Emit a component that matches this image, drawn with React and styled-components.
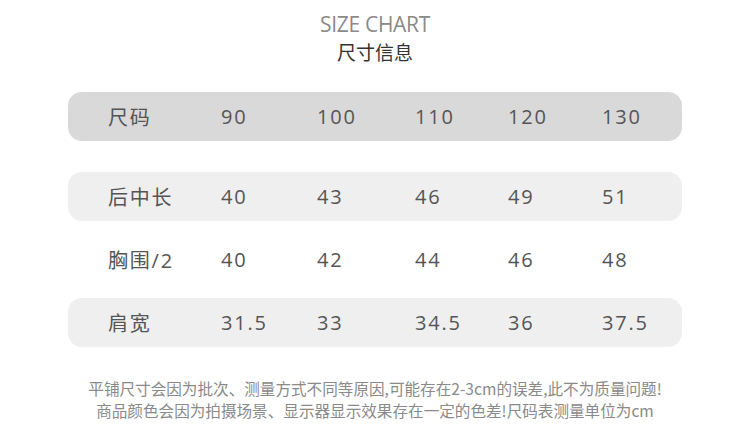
import React from "react";
import styled, { createGlobalStyle } from "styled-components";

const GlobalStyle = createGlobalStyle`
  html, body {
    margin: 0;
    padding: 0;
    background: #fff;
  }
  body {
    font-family: "Open Sans", "Noto Sans CJK SC", sans-serif;
  }
`;

const Page = styled.div`
  width: 750px;
  height: 439px;
  box-sizing: border-box;
  padding-top: 11px;
  display: flex;
  flex-direction: column;
  align-items: center;
`;

const Title = styled.div`
  font-size: 21px;
  line-height: 27px;
  color: #8a8a8a;
  letter-spacing: -0.3px;
`;

const SubTitle = styled.div`
  font-family: "Noto Sans CJK SC", sans-serif;
  font-size: 19px;
  line-height: 28px;
  color: #333;
`;

const Table = styled.div`
  width: 614px;
  margin-top: 26px;
  display: flex;
  flex-direction: column;
  gap: 14px;
`;

const Row = styled.div`
  display: grid;
  grid-template-columns: 113px 96px 98px 93px 94px 1fr;
  align-items: center;
  height: 49px;
  padding-left: 40px;
  border-radius: 14px;
  background: ${(p) => (p.$head ? "#d9d9d9" : p.$shade ? "#efefef" : "transparent")};
  margin-bottom: ${(p) => (p.$head ? "17px" : "0")};
`;

const Cell = styled.div`
  font-family: "Open Sans", "Noto Sans CJK SC", sans-serif;
  font-size: 20px;
  color: #555;
  letter-spacing: 1.8px;
  white-space: nowrap;
`;

const Note = styled.div`
  margin-top: 30px;
  font-family: "Noto Sans CJK SC", sans-serif;
  font-size: 15.6px;
  line-height: 22px;
  color: #8a8a8a;
  text-align: center;
  white-space: nowrap;
`;

const rows = [
  { label: "尺码", values: ["90", "100", "110", "120", "130"], head: true },
  { label: "后中长", values: ["40", "43", "46", "49", "51"], shade: true },
  { label: "胸围/2", values: ["40", "42", "44", "46", "48"] },
  { label: "肩宽", values: ["31.5", "33", "34.5", "36", "37.5"], shade: true },
];

export default function App() {
  return (
    <>
      <GlobalStyle />
      <Page>
        <Title>SIZE CHART</Title>
        <SubTitle>尺寸信息</SubTitle>
        <Table>
          {rows.map((r) => (
            <Row key={r.label} $head={r.head} $shade={r.shade}>
              <Cell>{r.label}</Cell>
              {r.values.map((v, i) => (
                <Cell key={i}>{v}</Cell>
              ))}
            </Row>
          ))}
        </Table>
        <Note>
          平铺尺寸会因为批次、测量方式不同等原因,可能存在2-3cm的误差,此不为质量问题!
          <br />
          商品颜色会因为拍摄场景、显示器显示效果存在一定的色差!尺码表测量单位为cm
        </Note>
      </Page>
    </>
  );
}
